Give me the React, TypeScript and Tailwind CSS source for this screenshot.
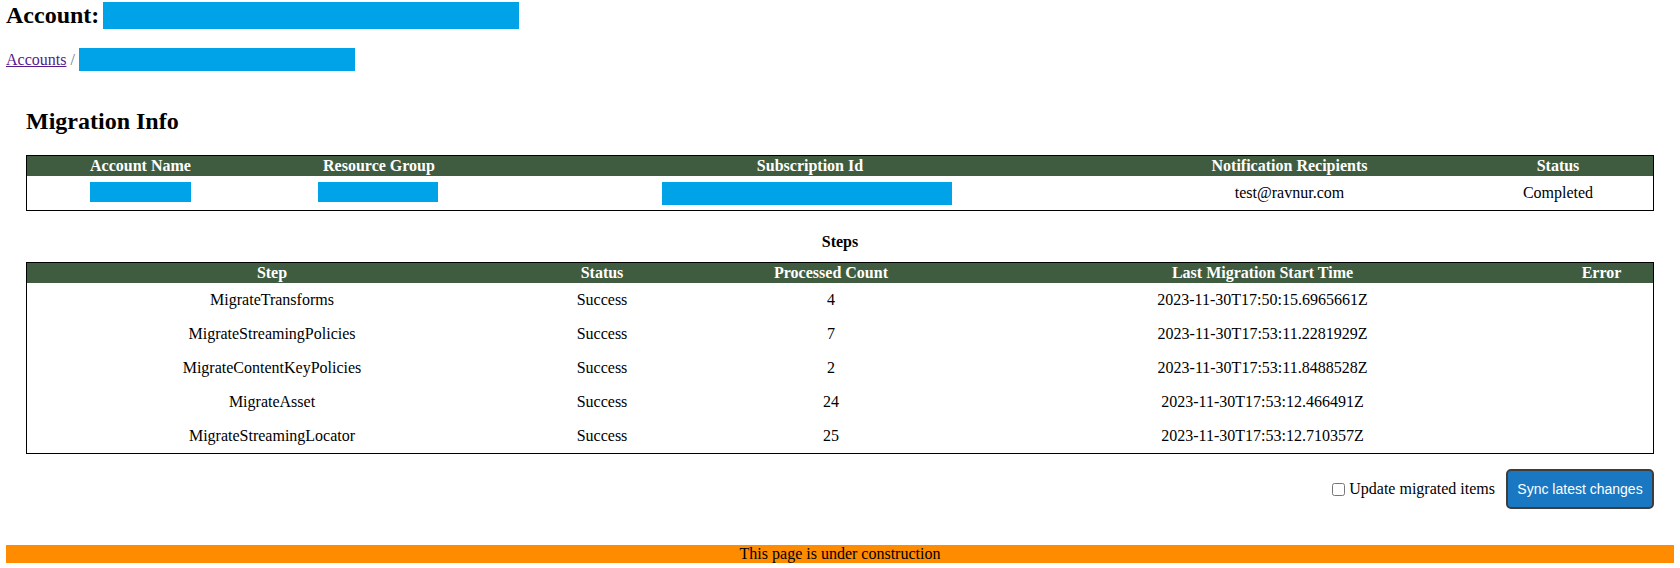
import React from 'react';

interface Step {
  name: string;
  status: string;
  count: number;
  started: string;
  error: string;
}

const steps: Step[] = [
  { name: 'MigrateTransforms', status: 'Success', count: 4, started: '2023-11-30T17:50:15.6965661Z', error: '' },
  { name: 'MigrateStreamingPolicies', status: 'Success', count: 7, started: '2023-11-30T17:53:11.2281929Z', error: '' },
  { name: 'MigrateContentKeyPolicies', status: 'Success', count: 2, started: '2023-11-30T17:53:11.8488528Z', error: '' },
  { name: 'MigrateAsset', status: 'Success', count: 24, started: '2023-11-30T17:53:12.466491Z', error: '' },
  { name: 'MigrateStreamingLocator', status: 'Success', count: 25, started: '2023-11-30T17:53:12.710357Z', error: '' },
];

export default function App() {
  return (
    <div className="w-[1680px] h-[568px] overflow-hidden bg-white text-black text-[16px] font-['Liberation_Serif','Times_New_Roman',serif]">
      <div className="px-[6px] pt-[2px]">
        <div className="flex items-center h-[27px]">
          <h2 className="text-[24px] font-bold leading-[27px]">Account:</h2>
          <span className="ml-[4px] w-[416px] h-[27px] bg-[#00a2e8]" />
        </div>

        <div className="flex items-center h-[23px] mt-[19px]">
          <a href="#" className="text-[#551a8b] underline leading-[18px]">Accounts</a>
          <span className="text-[#6c757d] whitespace-pre leading-[18px]"> / </span>
          <span className="w-[276px] h-[23px] bg-[#00a2e8]" />
        </div>

        <div className="px-[20px]">
          <h2 className="mt-[36px] text-[24px] font-bold leading-[28px]">Migration Info</h2>

          <div className="mt-[20px] border border-black">
            <table className="w-full table-fixed border-collapse">
              <colgroup>
                <col className="w-[227px]" />
                <col className="w-[250px]" />
                <col className="w-[612px]" />
                <col className="w-[347px]" />
                <col className="w-[190px]" />
              </colgroup>
              <thead>
                <tr className="bg-[#3f5c40] text-white">
                  <th className="h-[20px] p-0 leading-[20px] font-bold">Account Name</th>
                  <th className="h-[20px] p-0 leading-[20px] font-bold">Resource Group</th>
                  <th className="h-[20px] p-0 leading-[20px] font-bold">Subscription Id</th>
                  <th className="h-[20px] p-0 leading-[20px] font-bold">Notification Recipients</th>
                  <th className="h-[20px] p-0 leading-[20px] font-bold">Status</th>
                </tr>
              </thead>
              <tbody>
                <tr className="text-center">
                  <td className="h-[34px] p-0">
                    <div className="mx-auto mt-[-3px] w-[101px] h-[20px] bg-[#00a2e8]" />
                  </td>
                  <td className="h-[34px] p-0">
                    <div className="ml-[64px] mt-[-3px] w-[120px] h-[20px] bg-[#00a2e8]" />
                  </td>
                  <td className="h-[34px] p-0">
                    <div className="ml-[158px] w-[290px] h-[23px] bg-[#00a2e8]" />
                  </td>
                  <td className="h-[34px] p-0">test@ravnur.com</td>
                  <td className="h-[34px] p-0">Completed</td>
                </tr>
              </tbody>
            </table>
          </div>

          <div className="mt-[21px] text-center font-bold leading-[20px]">Steps</div>

          <div className="mt-[10px] border border-black">
            <table className="w-full table-fixed border-collapse">
              <colgroup>
                <col className="w-[490px]" />
                <col className="w-[170px]" />
                <col className="w-[288px]" />
                <col className="w-[575px]" />
                <col className="w-[103px]" />
              </colgroup>
              <thead>
                <tr className="bg-[#3f5c40] text-white">
                  <th className="h-[20px] p-0 leading-[20px] font-bold">Step</th>
                  <th className="h-[20px] p-0 leading-[20px] font-bold">Status</th>
                  <th className="h-[20px] p-0 leading-[20px] font-bold">Processed Count</th>
                  <th className="h-[20px] p-0 leading-[20px] font-bold">Last Migration Start Time</th>
                  <th className="h-[20px] p-0 leading-[20px] font-bold">Error</th>
                </tr>
              </thead>
              <tbody>
                {steps.map((s) => (
                  <tr key={s.name} className="text-center">
                    <td className="h-[34px] p-0">{s.name}</td>
                    <td className="h-[34px] p-0">{s.status}</td>
                    <td className="h-[34px] p-0">{s.count}</td>
                    <td className="h-[34px] p-0">{s.started}</td>
                    <td className="h-[34px] p-0">{s.error}</td>
                  </tr>
                ))}
              </tbody>
            </table>
          </div>

          <div className="mt-[15px] flex justify-end items-center">
            <label className="flex items-center">
              <input type="checkbox" className="w-[13px] h-[13px] m-0 mr-[4px]" />
              <span className="leading-[18px]">Update migrated items</span>
            </label>
            <button className="ml-[11px] w-[148px] h-[40px] rounded-[5px] border-2 border-[#3d3d3d] bg-[#1a77c2] text-white text-[14px] font-['Liberation_Sans',Arial,sans-serif]">
              Sync latest changes
            </button>
          </div>
        </div>

        <div className="mt-[36px] h-[18px] bg-[#ff8c00] text-center leading-[18px]">
          This page is under construction
        </div>
      </div>
    </div>
  );
}
